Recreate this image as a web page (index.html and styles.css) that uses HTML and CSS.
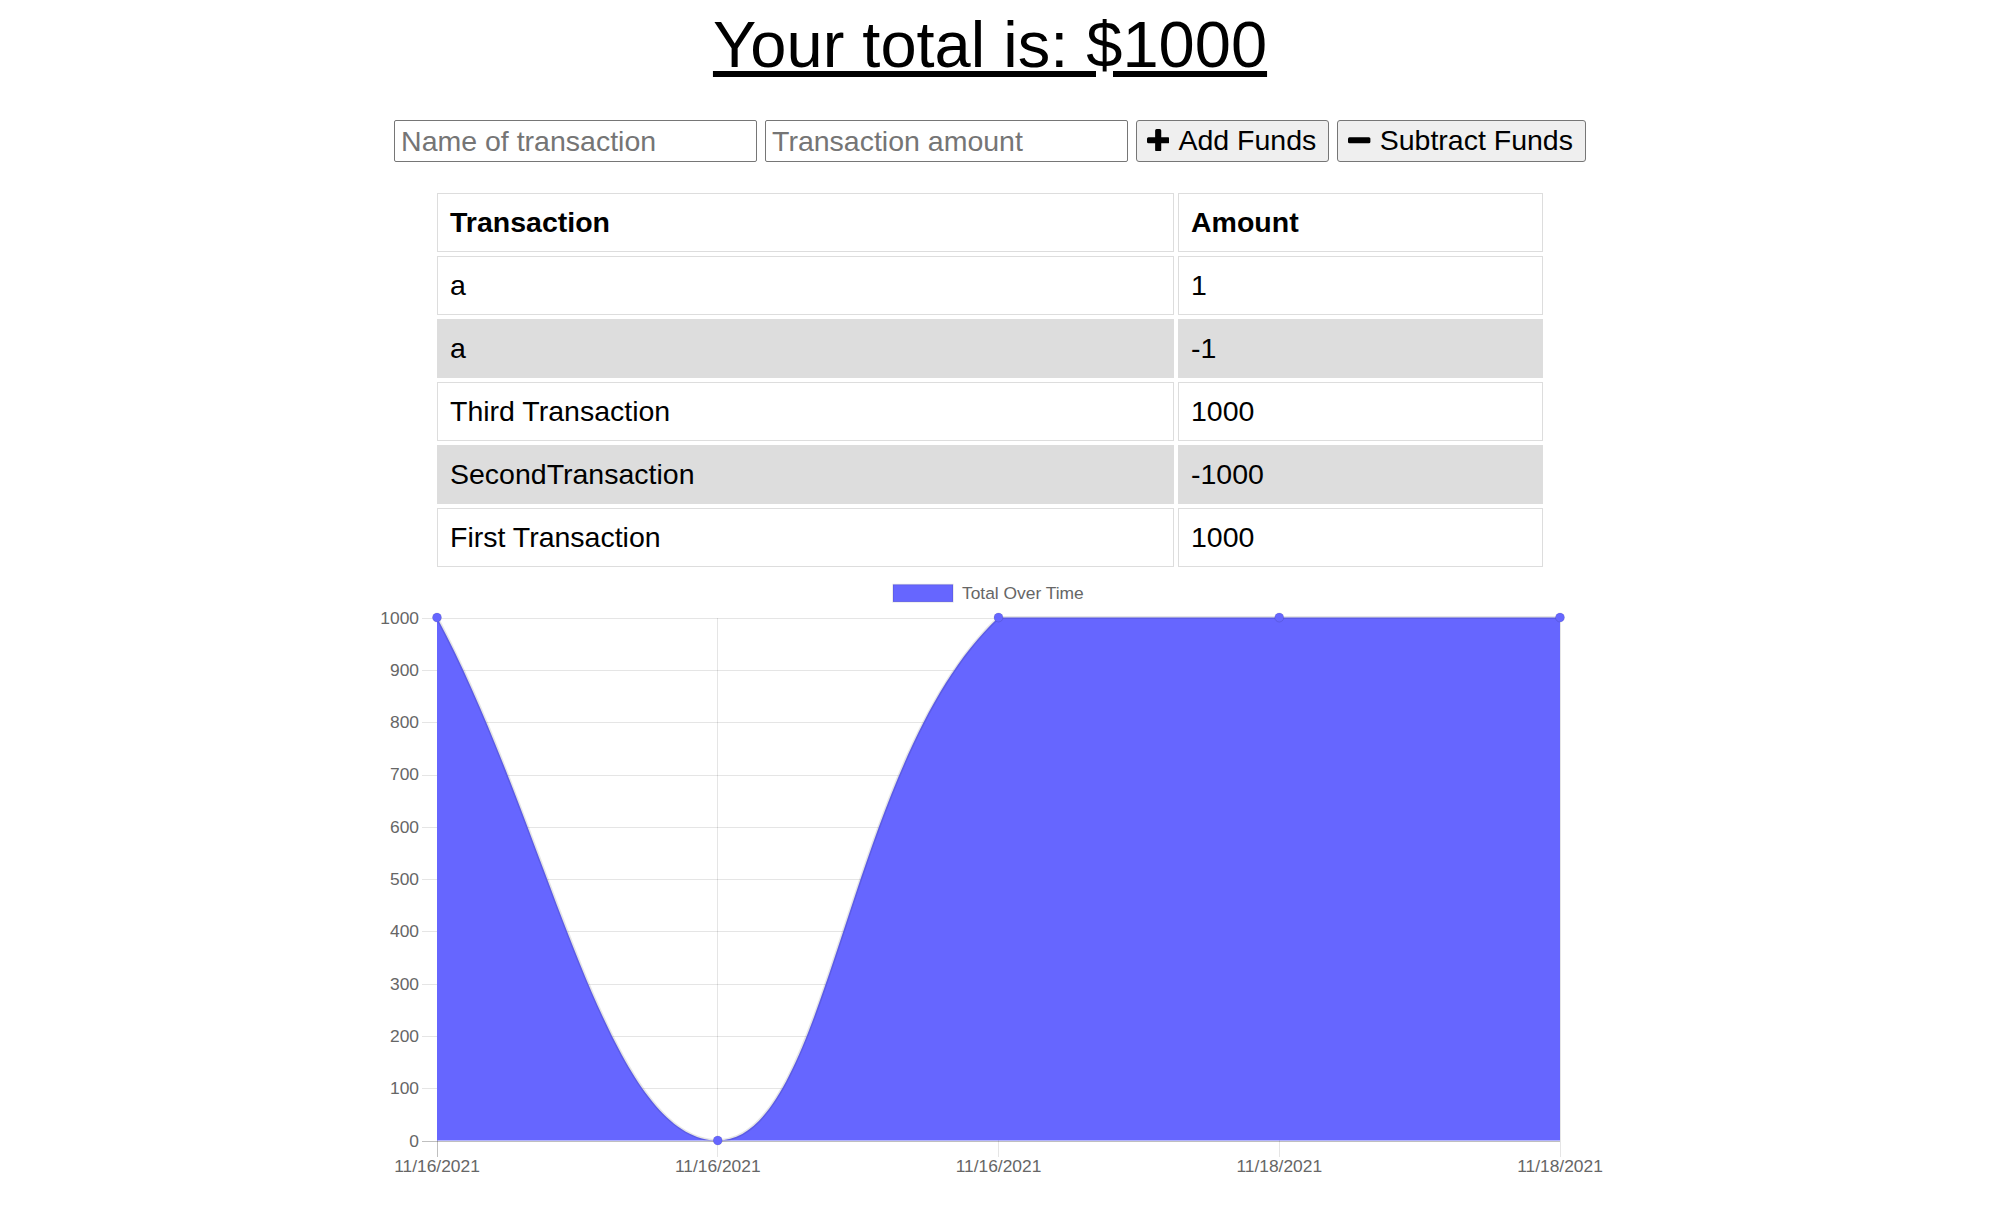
FILE: index.html
```html
<!DOCTYPE html>
<html lang="en">
<head>
<meta charset="utf-8">
<title>Budget Tracker</title>
<link rel="stylesheet" href="styles.css">
</head>
<body>
<div class="page">
  <h1 class="total">Your total is: $1000</h1>
  <div class="form">
    <input class="field" type="text" placeholder="Name of transaction">
    <input class="field" type="number" placeholder="Transaction amount">
    <button class="btn" type="button">
      <svg class="icon" viewBox="0 0 1408 1408"><path d="M512 96q0-96 96-96h192q96 0 96 96v416h416q96 0 96 96v192q0 96-96 96H896v416q0 96-96 96H608q-96 0-96-96V896H96q-96 0-96-96V608q0-96 96-96h416z"/></svg>
      <span>Add Funds</span>
    </button>
    <button class="btn" type="button">
      <svg class="icon" viewBox="0 0 1408 1408"><path d="M96 512h1216q96 0 96 96v192q0 96-96 96H96q-96 0-96-96V608q0-96 96-96z"/></svg>
      <span>Subtract Funds</span>
    </button>
  </div>

  <table class="tx">
    <colgroup><col class="c-name"><col class="c-amt"></colgroup>
    <thead>
      <tr><th>Transaction</th><th>Amount</th></tr>
    </thead>
    <tbody>
      <tr><td>a</td><td>1</td></tr>
      <tr class="alt"><td>a</td><td>-1</td></tr>
      <tr><td>Third Transaction</td><td>1000</td></tr>
      <tr class="alt"><td>SecondTransaction</td><td>-1000</td></tr>
      <tr><td>First Transaction</td><td>1000</td></tr>
    </tbody>
  </table>

  <div class="chart">
    <svg class="chart-svg" width="1230" height="615" viewBox="0 0 1230 615">
      <g transform="translate(0,-1.5)">
      <rect class="legend-box" x="518" y="15" width="60" height="17.4"/>
      <text class="chart-text" x="587" y="29">Total Over Time</text>

      <g class="grid">
        <line x1="47" y1="48.5" x2="1185" y2="48.5"/>
        <line x1="47" y1="100.5" x2="1185" y2="100.5"/>
        <line x1="47" y1="152.5" x2="1185" y2="152.5"/>
        <line x1="47" y1="205.5" x2="1185" y2="205.5"/>
        <line x1="47" y1="257.5" x2="1185" y2="257.5"/>
        <line x1="47" y1="309.5" x2="1185" y2="309.5"/>
        <line x1="47" y1="361.5" x2="1185" y2="361.5"/>
        <line x1="47" y1="414.5" x2="1185" y2="414.5"/>
        <line x1="47" y1="466.5" x2="1185" y2="466.5"/>
        <line x1="47" y1="518.5" x2="1185" y2="518.5"/>
        <line x1="342.5" y1="48" x2="342.5" y2="587"/>
        <line x1="623.5" y1="48" x2="623.5" y2="587"/>
        <line x1="904.5" y1="48" x2="904.5" y2="587"/>
        <line x1="1185.5" y1="48" x2="1185.5" y2="587"/>
      </g>
      <g class="grid-zero">
        <line x1="47" y1="571.5" x2="1185" y2="571.5"/>
        <line x1="62.5" y1="48" x2="62.5" y2="587"/>
      </g>

      <g class="chart-text y-labels">
        <text x="44" y="54">1000</text>
        <text x="44" y="106.3">900</text>
        <text x="44" y="158.6">800</text>
        <text x="44" y="210.9">700</text>
        <text x="44" y="263.2">600</text>
        <text x="44" y="315.5">500</text>
        <text x="44" y="367.8">400</text>
        <text x="44" y="420.1">300</text>
        <text x="44" y="472.4">200</text>
        <text x="44" y="524.7">100</text>
        <text x="44" y="577">0</text>
      </g>

      <g class="chart-text x-labels">
        <text x="62" y="602">11/16/2021</text>
        <text x="342.75" y="602">11/16/2021</text>
        <text x="623.5" y="602">11/16/2021</text>
        <text x="904.25" y="602">11/18/2021</text>
        <text x="1185" y="602">11/18/2021</text>
      </g>

      <path class="area" d="M62,48 C174.3,257.2 230.45,571 342.75,571 C455.05,571 471,190 623.5,48 C695.6,48 792,48 904.25,48 C1016.5,48 1072.7,48 1185,48 L1185,571 L62,571 Z"/>
      <path class="line" d="M62,48 C174.3,257.2 230.45,571 342.75,571 C455.05,571 471,190 623.5,48 C695.6,48 792,48 904.25,48 C1016.5,48 1072.7,48 1185,48"/>

      <g class="points">
        <circle cx="62" cy="48" r="4.5"/>
        <circle cx="342.75" cy="571" r="4.5"/>
        <circle cx="623.5" cy="48" r="4.5"/>
        <circle cx="904.25" cy="48" r="4.5"/>
        <circle cx="1185" cy="48" r="4.5"/>
      </g>
      </g>
    </svg>
  </div>
</div>
</body>
</html>
```

FILE: styles.css
```css
html, body {
  margin: 0;
  padding: 0;
  background: #ffffff;
  color: #000000;
  font-family: "Liberation Sans", Arial, sans-serif;
}

.page {
  width: 1980px;
}

.total {
  margin: 7px 0 0;
  font-size: 65px;
  font-weight: normal;
  line-height: normal;
  text-align: center;
  text-decoration: underline;
}

.form {
  display: flex;
  justify-content: center;
  gap: 8px;
  margin-top: 38px;
}

.field {
  box-sizing: border-box;
  width: 363px;
  height: 42px;
  margin: 0;
  padding: 0 6px;
  border: 1px solid #767676;
  border-radius: 2px;
  background: #ffffff;
  font-family: "Liberation Sans", Arial, sans-serif;
  font-size: 28.5px;
  color: #000000;
  -moz-appearance: textfield;
}

.field::-webkit-outer-spin-button,
.field::-webkit-inner-spin-button {
  -webkit-appearance: none;
  margin: 0;
}

.field::placeholder {
  color: #757575;
}

.btn {
  box-sizing: border-box;
  height: 42px;
  margin: 0;
  display: inline-flex;
  align-items: center;
  gap: 9px;
  padding: 0 12px 2px 10px;
  border: 1px solid #767676;
  border-radius: 3px;
  background: #efefef;
  font-family: "Liberation Sans", Arial, sans-serif;
  font-size: 28.5px;
  color: #000000;
  white-space: nowrap;
}

.icon {
  width: 22.4px;
  height: 22.4px;
  flex: none;
  fill: #000000;
}

.tx {
  margin: 27px auto 0;
  width: 1114px;
  table-layout: fixed;
  border-collapse: separate;
  border-spacing: 4px;
  font-size: 28.5px;
}

.c-name {
  width: 737px;
}

.c-amt {
  width: 365px;
}

.tx th,
.tx td {
  border: 1px solid #dddddd;
  padding: 12px;
  text-align: left;
  line-height: normal;
}

.tx th {
  font-weight: bold;
}

.tx tr.alt td {
  background: #dddddd;
}

.chart {
  width: 1230px;
  height: 615px;
  margin: 0 auto;
}

.chart-svg {
  display: block;
}

.chart-text {
  font-family: "Liberation Sans", Arial, sans-serif;
  font-size: 17.4px;
  fill: #666666;
}

.y-labels text {
  text-anchor: end;
}

.x-labels text {
  text-anchor: middle;
}

.legend-box {
  fill: #6666ff;
  stroke: rgba(0, 0, 0, 0.1);
  stroke-width: 1.5;
}

.grid line {
  stroke: rgba(0, 0, 0, 0.1);
  stroke-width: 1;
  shape-rendering: crispEdges;
}

.grid-zero line {
  stroke: rgba(0, 0, 0, 0.25);
  stroke-width: 1;
  shape-rendering: crispEdges;
}

.area {
  fill: #6666ff;
}

.line {
  fill: none;
  stroke: rgba(0, 0, 0, 0.1);
  stroke-width: 3;
}

.points circle {
  fill: #6666ff;
  stroke: rgba(0, 0, 0, 0.1);
  stroke-width: 1;
}
```
